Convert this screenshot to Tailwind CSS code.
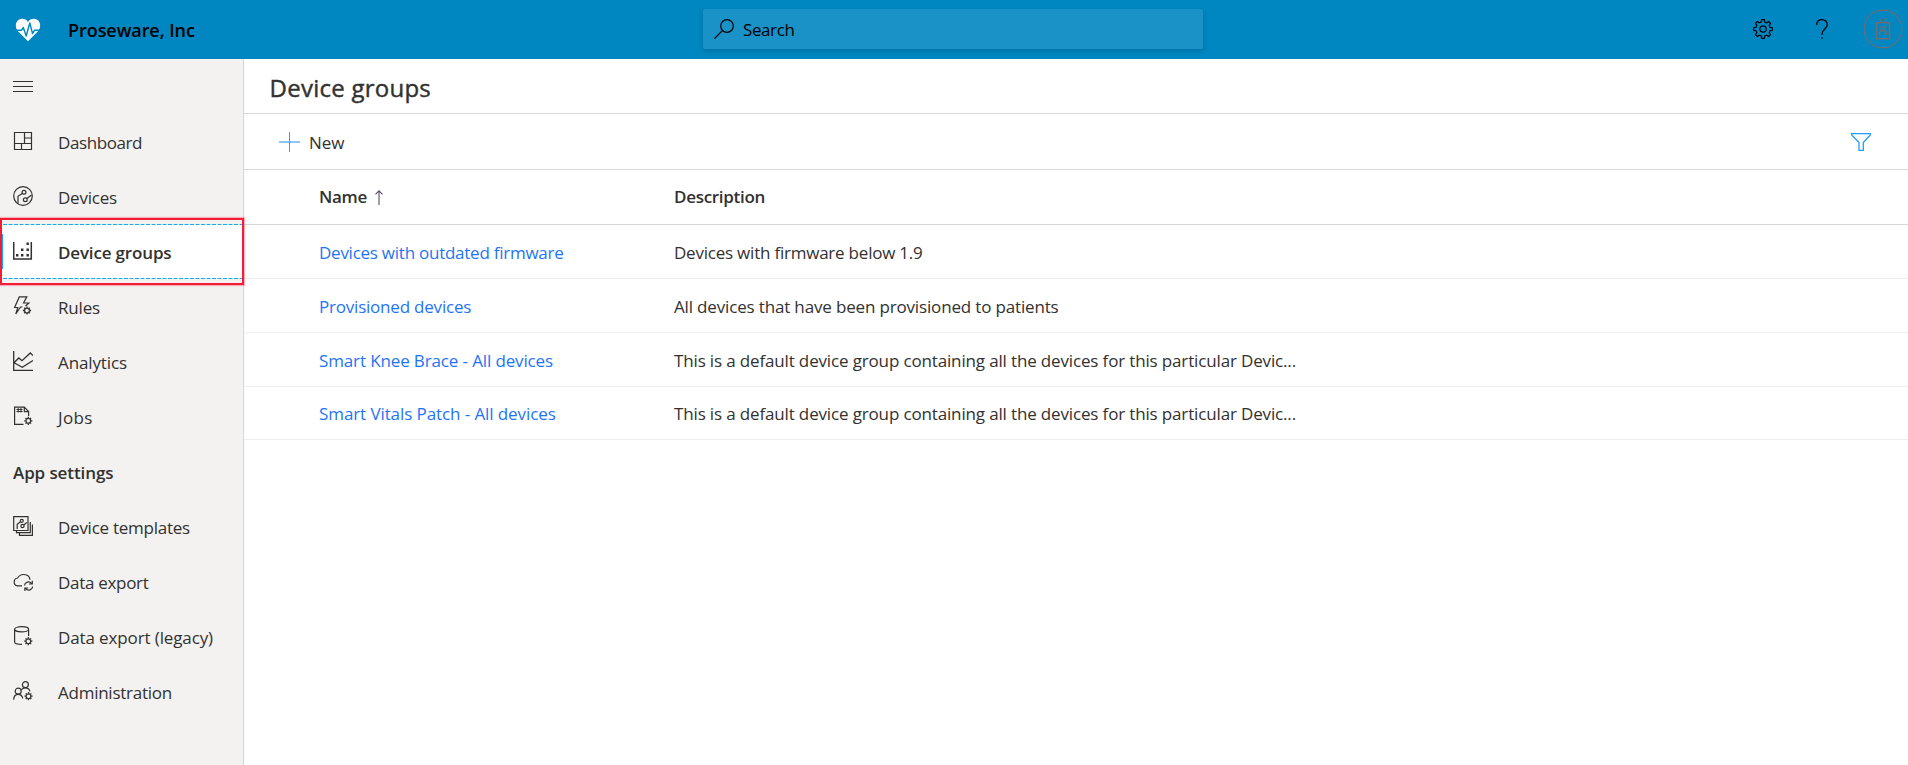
<!DOCTYPE html>
<html lang="en">
<head>
<meta charset="utf-8">
<title>Device groups - Proseware, Inc</title>
<script src="https://cdn.jsdelivr.net/npm/@tailwindcss/browser@4"></script>
</head>
<body class="flex h-[765px] flex-col overflow-hidden bg-white font-['Open_Sans','Noto_Sans',sans-serif] text-[17px] leading-6 whitespace-nowrap text-[#323130]">

<!-- Gear badge shared by several navigation icons -->
<svg class="hidden">
  <defs>
    <g id="cog" fill="none" stroke="currentColor">
      <circle cx="0" cy="0" r="2.4" stroke-width="1.3"/>
      <path stroke-width="1.3" d="M0-2.6V-4.1M0 2.6V4.1M-2.6 0H-4.1M2.6 0H4.1M1.8-1.8 2.8-2.8M-1.8-1.8-2.8-2.8M1.8 1.8 2.8 2.8M-1.8 1.8-2.8 2.8"/>
    </g>
  </defs>
</svg>

<header class="flex h-[59px] shrink-0 items-center bg-[#0086c0] text-black">
  <div class="flex w-[703px] items-center">
    <svg class="ml-[15px] h-[24px] w-[26px]" viewBox="0 0 26 24">
      <path fill="#fff" d="M13 23.2 3 13.2C-.2 9.800.3 4.200 3.400 2 6.600-.3 10.900.5 13 4c2.100-3.500 6.400-4.300 9.600-2 3.100 2.200 3.600 7.800.4 11.200Z"/>
      <path fill="none" stroke="#0086c0" stroke-width="1.400" stroke-linejoin="round" d="M1.500 12.300H6.500L8.300 9.500l2.900 8.500L14.800 5l2.700 10.500 2.200-3.300H24.500"/>
    </svg>
    <span class="ml-[27px] pt-px text-[18px] font-semibold tracking-[-0.06px]">Proseware, Inc</span>
  </div>
  <div class="-mt-px flex h-10 w-[500px] items-center rounded-[2px] bg-[#1a92c8] shadow-[0_2px_5px_rgba(0,0,0,0.16)]">
    <svg class="ml-[11px] h-5 w-5" viewBox="0 0 20 20" fill="none" stroke="currentColor" stroke-width="1.200"><circle cx="13" cy="7" r="6.300"/><path d="M8.500 11.500.4 19.600"/></svg>
    <span class="ml-[9px] pt-0.5 tracking-[-0.4px]">Search</span>
  </div>
  <div class="ml-auto flex items-center">
    <svg class="-mt-px h-5 w-5" viewBox="0 0 20 20" fill="none" stroke="currentColor" stroke-width="1.200">
      <circle cx="10" cy="10" r="3.200"/>
      <path d="M8.700.7H11.300L11.700 3 13.700 3.800 15.600 2.500 17.500 4.400 16.200 6.300 17 8.300 19.300 8.700V11.300L17 11.700 16.200 13.700 17.500 15.600 15.600 17.500 13.700 16.200 11.700 17 11.300 19.300H8.700L8.300 17 6.300 16.200 4.400 17.500 2.500 15.600 3.800 13.700 3 11.700.7 11.300V8.700L3 8.300 3.800 6.300 2.500 4.400 4.400 2.500 6.300 3.800 8.300 3Z"/>
    </svg>
    <svg class="-mt-px ml-[43px] h-5 w-3" viewBox="0 0 12 20" fill="none" stroke="currentColor" stroke-width="1.300"><path d="M.7 6C.7 2.800 2.900.7 6 .7s5.300 2 5.300 5c0 4-5.300 4.800-5.300 9.300v1"/><path d="M6 18.300V19.800"/></svg>
    <svg class="-mt-px mr-[5px] ml-[35px] h-10 w-10" viewBox="0 0 40 40" fill="none" stroke="#6f6e70">
      <circle cx="20" cy="20" r="18.900" stroke-width="1.100"/>
      <path stroke-width="1.600" d="M13.500 13.700H26.500V29.700H13.500Z"/>
      <path stroke-width="1.300" d="M16.500 9l2.300 4.700M23.700 9l-2.300 4.700M16.700 26v-1.300a3.300 3.300 0 0 1 6.600 0v1.300"/>
      <circle cx="20" cy="19.700" r="2" stroke-width="1.300"/>
    </svg>
  </div>
</header>

<div class="flex min-h-0 flex-1">
  <nav class="relative w-[244px] shrink-0 border-r border-[#d8d6d4] bg-[#f3f2f1]">
    <div class="flex h-[55px] items-center pl-[13px]">
      <svg class="-mt-px h-5 w-5" viewBox="0 0 20 20" stroke="#323130" stroke-width="1"><path d="M0 5.500H20M0 10.500H20M0 15.500H20"/></svg>
    </div>
    <a class="flex h-[55px] items-center pl-[13px]">
      <svg class="-mt-px h-5 w-5" viewBox="0 0 20 20" fill="none" stroke="currentColor" stroke-width="1.200"><path d="M1.500 1.500H18.500V18.500H1.500ZM11.500 1.500V12.500M1.500 12.500H18.500M11.500 7H18.500M8.500 12.500V18.500"/></svg>
      <span class="ml-[25px] pt-0.5 tracking-[-0.41px]">Dashboard</span>
    </a>
    <a class="flex h-[55px] items-center pl-[13px]">
      <svg class="-mt-px h-5 w-5" viewBox="0 0 20 20" fill="none" stroke="currentColor" stroke-width="1.200"><circle cx="10" cy="10" r="9.300"/><circle cx="11" cy="6.300" r="1.900"/><circle cx="12.300" cy="13.800" r="1.900"/><path d="M9.300 7.400 5 10.300V17.500M13.800 12.500 18.600 9"/></svg>
      <span class="ml-[25px] pt-0.5 tracking-[-0.21px]">Devices</span>
    </a>
    <a class="relative flex h-[55px] items-center bg-white pl-[13px]">
      <svg class="absolute top-0 left-0 h-[55px] w-[243px]" fill="none"><path stroke="#12a9f7" stroke-dasharray="4 1.500" d="M3 .5H243M3 54.500H243"/><path stroke="#12a9f7" stroke-width="2" d="M2 10V45"/></svg>
      <svg class="-mt-px h-5 w-5" viewBox="0 0 20 20"><path fill="none" stroke="currentColor" stroke-width="1.500" d="M.7 1V18H18.300V1"/><path fill="currentColor" d="M3 13h2.400v2.400H3zM8 13h2.400v2.400H8zM13.500 13h2.400v2.400h-2.400zM8 7.500h2.400v2.400H8zM13.500 7.500h2.400v2.400h-2.400zM13.500 1.500h2.400v2.400h-2.400z"/></svg>
      <span class="ml-[25px] pt-0.5 font-semibold tracking-[-0.16px]">Device groups</span>
    </a>
    <a class="flex h-[55px] items-center pl-[13px]">
      <svg class="-mt-px h-5 w-5" viewBox="0 0 20 20" fill="none" stroke="currentColor" stroke-width="1.200"><path d="M9.500 11H7.500L2.800 18 4.800 11.500H1.600L6.300.9H13.800L10.600 7H15.800L12.500 10"/><use href="#cog" x="14" y="14.500"/></svg>
      <span class="ml-[25px] pt-0.5 tracking-[-0.17px]">Rules</span>
    </a>
    <a class="flex h-[55px] items-center pl-[13px]">
      <svg class="-mt-px h-5 w-5" viewBox="0 0 20 20" fill="none" stroke="currentColor" stroke-width="1.300"><path d="M.7 0V19.300H20M1 11.800 5.800 7 9 9.700 17.300 2 20 4.600M1 11.800 9.300 16.300 20 9.500"/></svg>
      <span class="ml-[25px] pt-0.5 tracking-[-0.12px]">Analytics</span>
    </a>
    <a class="flex h-[55px] items-center pl-[13px]">
      <svg class="-mt-px h-5 w-5" viewBox="0 0 20 20" fill="none" stroke="currentColor" stroke-width="1.200"><path d="M10.500 18.400H1.600V1.200H11.300L15.600 5.600V10M11.300 1.200V5.600H15.600"/><path stroke-width="1" d="M3.500 3.500H9.500M3.500 5.500H9.500M5.200 2V6.500M8 2V6.500"/><use href="#cog" x="15.300" y="14.800"/></svg>
      <span class="ml-[25px] pt-0.5 tracking-[0.35px]">Jobs</span>
    </a>
    <div class="flex h-[55px] items-center pt-0.5 pl-[13px] font-semibold tracking-[-0.1px]">App settings</div>
    <a class="flex h-[55px] items-center pl-[13px]">
      <svg class="-mt-px h-5 w-5" viewBox="0 0 20 20" fill="none" stroke="currentColor" stroke-width="1.200"><path d="M.7.7H15V14.500H.7ZM3.500 14.500V16.700H17.300V6M6.500 17V19.300H19.400V8.500"/><circle cx="8.800" cy="4.800" r="1.500"/><circle cx="9.500" cy="10" r="1.600"/><path d="M7.500 5.800 4.200 8.400V13M10.800 9 13.800 6.500"/></svg>
      <span class="ml-[25px] pt-0.5 tracking-[-0.25px]">Device templates</span>
    </a>
    <a class="flex h-[55px] items-center pl-[13px]">
      <svg class="-mt-px h-5 w-5" viewBox="0 0 20 20" fill="none" stroke="currentColor" stroke-width="1.200"><path d="M9 14.900H4.500A4 4 0 0 1 4.600 7C5.800 5 8 3.300 11 3.500c3.300.2 5.600 2 6 5.200M11.500 14.500A4 4 0 0 1 18.500 12.300M19.300 9.800V13H16M19.700 15.500A4 4 0 0 1 12.700 17.700M11.900 20V17H15.200"/></svg>
      <span class="ml-[25px] pt-0.5 tracking-[-0.3px]">Data export</span>
    </a>
    <a class="flex h-[55px] items-center pl-[13px]">
      <svg class="-mt-px h-5 w-5" viewBox="0 0 20 20" fill="none" stroke="currentColor" stroke-width="1.200"><ellipse cx="8.600" cy="3.300" rx="7" ry="2.600"/><path d="M1.600 3.300V15.800c0 1.500 3 2.600 7.400 2.600M15.600 3.300V10"/><use href="#cog" x="15.300" y="15.200"/></svg>
      <span class="ml-[25px] pt-0.5 tracking-[-0.12px]">Data export (legacy)</span>
    </a>
    <a class="flex h-[55px] items-center pl-[13px]">
      <svg class="-mt-px h-5 w-5" viewBox="0 0 20 20" fill="none" stroke="currentColor" stroke-width="1.200"><circle cx="12.400" cy="3.700" r="3"/><circle cx="5.200" cy="10.200" r="3"/><path d="M.6 18.700C.8 15.500 2.500 13.300 5.200 13.300c2.500 0 4 1.700 4.600 4M8.300 9C9 7.500 10.500 6.800 12.400 6.800c2.300 0 4 1.300 4.600 3.500"/><use href="#cog" x="15.500" y="15.200"/></svg>
      <span class="ml-[25px] pt-0.5 tracking-[-0.25px]">Administration</span>
    </a>
    <!-- Callout frame around the selected entry -->
    <div class="absolute top-[159px] left-0 h-[67px] w-[244px] border-2 border-[#f41c37] shadow-[0_0_1px_1px_rgba(244,28,55,0.3)]"></div>
  </nav>

  <main class="flex min-w-0 flex-1 flex-col">
    <h1 class="h-[55px] border-b border-[#d6d6d6] pt-[11px] pl-[25.5px] text-[24px] leading-[36px] tracking-[0.25px] [-webkit-text-stroke:0.4px_#323130]">Device groups</h1>
    <div class="flex h-[56px] items-center border-b border-[#d6d6d6] pr-[37px] pl-[35px]">
      <svg class="-mt-px h-[21px] w-[21px]" viewBox="0 0 21 21"><path stroke="#8cc4fb" stroke-width="2" d="M0 11H21"/><path stroke="#12a9f7" d="M10.500 1V21"/></svg>
      <span class="ml-[9px] pt-0.5">New</span>
      <svg class="ml-auto h-5 w-5" viewBox="0 0 20 20" fill="none" stroke="#229df8" stroke-width="1.300"><path d="M.7 1.600H19.300V3L12.300 10.500V18.300H8V10.500L.7 3Z"/></svg>
    </div>
    <div class="grid grid-cols-[430px_1fr] text-[17px]">
      <div class="col-span-2 grid h-[55px] grid-cols-subgrid items-center border-b border-[#d6d6d6] pl-[75px] font-semibold">
        <div class="flex items-center gap-2 tracking-[-0.3px]">Name
          <svg class="h-[15px] w-2" viewBox="0 0 8 15" fill="none" stroke="#5c4a63" stroke-width="1.100"><path d="M4 15V.8M.5 4.300 4 .8 7.500 4.300"/></svg>
        </div>
        <div class="tracking-[-0.3px]">Description</div>
      </div>
      <div class="col-span-2 grid h-[54px] grid-cols-subgrid items-center border-b border-[#efefef] pt-0.5 pl-[75px]">
        <a class="tracking-[-0.25px] text-[#1f74f5]">Devices with outdated firmware</a>
        <div class="tracking-[-0.22px]">Devices with firmware below 1.9</div>
      </div>
      <div class="col-span-2 grid h-[54px] grid-cols-subgrid items-center border-b border-[#efefef] pt-0.5 pl-[75px]">
        <a class="tracking-[-0.21px] text-[#1f74f5]">Provisioned devices</a>
        <div class="tracking-[-0.16px]">All devices that have been provisioned to patients</div>
      </div>
      <div class="col-span-2 grid h-[54px] grid-cols-subgrid items-center border-b border-[#efefef] pt-0.5 pl-[75px]">
        <a class="tracking-[-0.13px] text-[#1f74f5]">Smart Knee Brace - All devices</a>
        <div class="tracking-[-0.15px]">This is a default device group containing all the devices for this particular Devic...</div>
      </div>
      <div class="col-span-2 grid h-[53px] grid-cols-subgrid items-center border-b border-[#efefef] pt-0.5 pl-[75px]">
        <a class="tracking-[-0.09px] text-[#1f74f5]">Smart Vitals Patch - All devices</a>
        <div class="tracking-[-0.15px]">This is a default device group containing all the devices for this particular Devic...</div>
      </div>
    </div>
  </main>
</div>
</body>
</html>
